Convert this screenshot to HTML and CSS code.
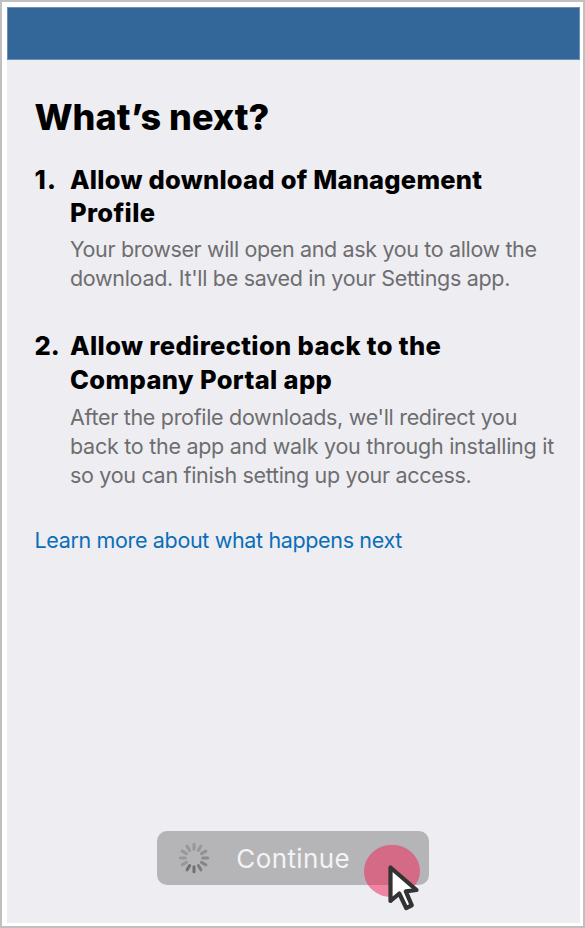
FILE: index.html
```html
<!DOCTYPE html>
<html lang="en">
<head>
<meta charset="utf-8">
<title>What’s next?</title>
<link rel="stylesheet" href="styles.css">
</head>
<body>
<div class="frame">
  <main class="screen">
    <header class="bar"></header>
    <section class="content">
      <h1>What’s next?</h1>
      <ol class="steps">
        <li class="step">
          <span class="num n1">1.</span>
          <div>
            <h2><span class="t1">Allow download of Management</span><br><span class="t2">Profile</span></h2>
            <p><span class="b1">Your browser will open and ask you to allow the</span><br><span class="b2">download. It'll be saved in your Settings app.</span></p>
          </div>
        </li>
        <li class="step">
          <span class="num">2.</span>
          <div>
            <h2><span class="t3">Allow redirection back to the</span><br><span class="t4">Company Portal app</span></h2>
            <p><span class="b3">After the profile downloads, we'll redirect you</span><br><span class="b4">back to the app and walk you through installing it</span><br><span class="b5">so you can finish setting up your access.</span></p>
          </div>
        </li>
      </ol>
      <a class="link">Learn more about what happens next</a>
    </section>
    <footer class="actions">
      <div class="button">
        <svg class="spinner" viewBox="-16 -16 32 32" width="32" height="32" stroke-width="3" stroke-linecap="round">
          <g stroke="#98989a">
            <path d="M0-8.7V-13.7"/>
            <path d="M0-8.7V-13.7" transform="rotate(30)"/>
            <path d="M0-8.7V-13.7" transform="rotate(60)" stroke="#929294"/>
            <path d="M0-8.7V-13.7" transform="rotate(90)" stroke="#8b8b8d"/>
            <path d="M0-8.7V-13.7" transform="rotate(120)" stroke="#858587"/>
            <path d="M0-8.7V-13.7" transform="rotate(150)" stroke="#7c7c7e"/>
            <path d="M0-8.7V-13.7" transform="rotate(180)" stroke="#707072"/>
            <path d="M0-8.7V-13.7" transform="rotate(210)" stroke="#707072"/>
            <path d="M0-8.7V-13.7" transform="rotate(240)"/>
            <path d="M0-8.7V-13.7" transform="rotate(270)"/>
            <path d="M0-8.7V-13.7" transform="rotate(300)"/>
            <path d="M0-8.7V-13.7" transform="rotate(330)"/>
          </g>
        </svg>
        <span class="label">Continue</span>
        <svg class="pointer" viewBox="360 840 66 76" width="66" height="76">
          <path d="M364 871A28 26.2 0 0 1 420 871Q420 879 415 885H368Q364 879 364 871Z" fill="#d46a86"/>
          <path d="M368 885H415A28 26.2 0 0 1 368 885Z" fill="#f084a4"/>
          <path d="M390.5 867.5V901L399.3 893.5L406.2 908L411.8 905.4L405.8 891.4L416.5 890Z" fill="#fff" stroke="#333" stroke-width="4.2" stroke-linejoin="round"/>
        </svg>
      </div>
    </footer>
  </main>
</div>
</body>
</html>
```
FILE: styles.css
```css
* { box-sizing: border-box; }
body { margin: 0; font-family: Inter, "Liberation Sans", sans-serif; }
.frame {
  height: 928px;
  padding: 5px 3.5px 3.5px 5px;
  border: 2px solid #c0c0c0;
  background: #fff;
}
.screen {
  display: flex;
  flex-direction: column;
  height: 100%;
  background: #eeedf2;
}
.bar {
  height: 53px;
  flex: none;
  background: #336699;
  border: 1px solid #6d91b6;
}
.content { flex: 1; padding: 35px 0 0 27.5px; white-space: nowrap; }
h1 { margin: 0; font-size: 36px; line-height: 44px; font-weight: 800; }
.steps { margin: 24px 0 0; padding: 0; list-style: none; }
.step { display: grid; grid-template-columns: 35.5px 1fr; margin-bottom: 36px; }
.num, h2 { margin: 0; font-size: 25.5px; line-height: 33px; font-weight: 800; }
.n1 { letter-spacing: 1.2px; }
.t1 { letter-spacing: 0.23px; }
.t2 { letter-spacing: 0.35px; }
.t3, .t4 { letter-spacing: 0.37px; }
p { margin: 6px 0 0; font-size: 21.5px; line-height: 29px; color: #6d6d70; letter-spacing: -0.31px; }
.b1 { letter-spacing: -0.36px; }
.b4 { letter-spacing: -0.27px; }
.step + .step h2 { line-height: 34px; }
.step + .step p { margin-top: 5.5px; }
.link { display: block; font-size: 21.5px; line-height: 29px; color: #0b6eb8; letter-spacing: -0.35px; }
.actions { flex: none; display: flex; justify-content: center; padding-bottom: 38px; }
.button {
  position: relative;
  display: flex;
  align-items: center;
  width: 272px;
  height: 54px;
  padding-left: 21px;
  border-radius: 10px;
  background: #b5b5b7;
}
.label { margin: 2px 0 0 26px; font-size: 26px; letter-spacing: 0.4px; color: #f3f3f5; }
.pointer { position: absolute; left: 203px; top: 9px; }
```
